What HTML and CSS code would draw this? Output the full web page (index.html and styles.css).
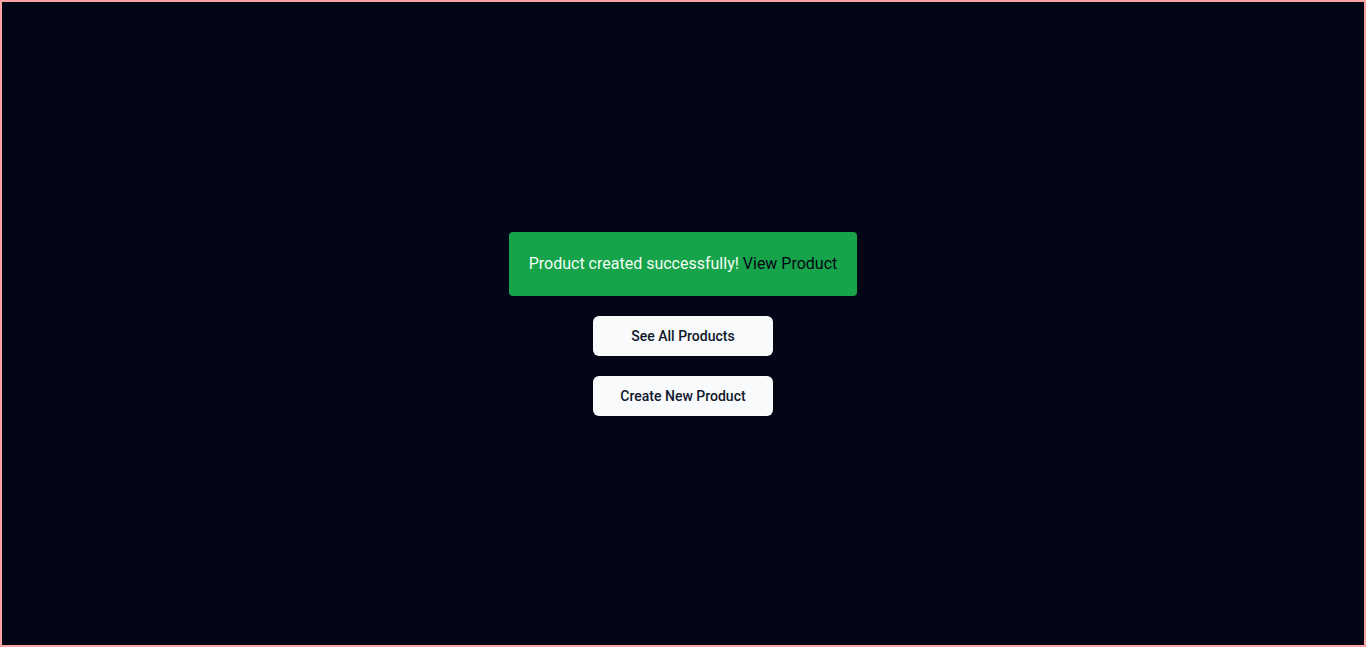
FILE: index.html
```html
<!DOCTYPE html>
<html>
<head>
<meta charset="utf-8">
<link rel="stylesheet" href="styles.css">
</head>
<body>
<div class="frame">
  <div class="stack">
    <div class="toast">Product created successfully! <a class="toast-link" href="#">View Product</a></div>
    <button class="btn">See All Products</button>
    <button class="btn">Create New Product</button>
  </div>
</div>
</body>
</html>
```

FILE: styles.css
```css
* { box-sizing: border-box; }
html, body { margin: 0; padding: 0; }
body {
  background: #020617;
  font-family: Roboto, "Liberation Sans", sans-serif;
}
.frame {
  height: 100vh;
  border: 2px solid #fca5a5;
  display: flex;
  align-items: center;
  justify-content: center;
}
.stack {
  display: flex;
  flex-direction: column;
  align-items: center;
  gap: 20px;
}
.toast {
  background: #16a34a;
  color: #f0fdf4;
  font-size: 16px;
  line-height: 24px;
  padding: 20px;
  border-radius: 4px;
}
.toast-link {
  color: #020617;
  text-decoration: none;
}
.btn {
  width: 180px;
  height: 40px;
  border: none;
  border-radius: 6px;
  background: #f8fafc;
  color: #0f172a;
  font-family: Roboto, "Liberation Sans", sans-serif;
  font-size: 14px;
  font-weight: 500;
  cursor: pointer;
}
```
